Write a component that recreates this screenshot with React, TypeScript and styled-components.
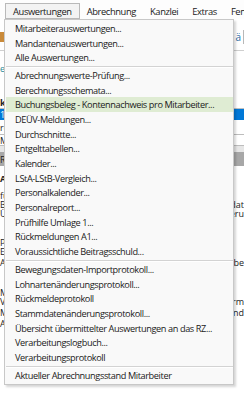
import styled, { createGlobalStyle } from "styled-components";

const GlobalStyle = createGlobalStyle`
    html, body {
        margin: 0;
        padding: 0;
        background: #ffffff;
    }
    body {
        width: 244px;
        height: 399px;
        overflow: hidden;
        font-family: "Open Sans", "Noto Sans", sans-serif;
    }
`;

const Page = styled.div`
    position: relative;
    width: 244px;
    height: 399px;
    overflow: hidden;
    background: #ffffff;
`;

const MenuBar = styled.div`
    display: flex;
    align-items: center;
    height: 19px;
    padding-left: 5px;
    background: #fdfdfd;
    font-size: 9.4px;
    letter-spacing: -0.4px;
    color: #1a1a1a;
`;

const MenuTitle = styled.div<{ $active?: boolean }>`
    display: flex;
    align-items: center;
    height: 14px;
    padding: 0 ${p => (p.$active ? 7 : 6)}px;
    margin-top: 3px;
    white-space: nowrap;
    border: 1px solid ${p => (p.$active ? "#b9b9b9" : "transparent")};
    background: ${p => (p.$active ? "#f3f3f3" : "transparent")};
`;

const Toolbar = styled.div`
    display: flex;
    justify-content: space-between;
    align-items: center;
    height: 31px;
    border-bottom: 1px solid #cfcfcf;
`;

const ToolIcon = styled.div<{ $color: string }>`
    width: 5px;
    height: 10px;
    margin-top: 4px;
    background: ${p => p.$color};
`;

const ToolGroup = styled.div`
    display: flex;
    align-items: center;
    gap: 2px;
    margin-top: 4px;
    font-size: 10px;
    color: #2b6ca3;
`;

const ToolSep = styled.div`
    width: 1px;
    height: 14px;
    background: #b8b8b8;
`;

const Content = styled.div`
    display: flex;
    flex-direction: column;
    font-size: 9px;
    color: #222;
`;

const Row = styled.div<{ $h: number; $bg?: string; $line?: string }>`
    display: flex;
    justify-content: space-between;
    align-items: center;
    height: ${p => p.$h}px;
    background: ${p => p.$bg || "transparent"};
    border-top: ${p => (p.$line ? `1px solid ${p.$line}` : "none")};
    white-space: nowrap;
    overflow: hidden;
`;

const Cell = styled.span<{ $color?: string; $bold?: boolean }>`
    color: ${p => p.$color || "#222"};
    font-weight: ${p => (p.$bold ? 700 : 400)};
`;

const Dropdown = styled.div`
    position: absolute;
    top: 19px;
    left: 4px;
    width: 227px;
    padding: 1px 0 1px 1px;
    background: #f9f9f9;
    border: 1px solid #c8c8c8;
    box-shadow: 2px 2px 2px rgba(0, 0, 0, 0.16);
    font-size: 9.2px;
    letter-spacing: -0.4px;
    color: #1a1a1a;
`;

const Item = styled.div<{ $hover?: boolean }>`
    display: flex;
    align-items: center;
    height: 14.7px;
    padding-left: 9px;
    white-space: nowrap;
    background: ${p => (p.$hover ? "#dfecd3" : "transparent")};
`;

const Separator = styled.div`
    height: 1px;
    margin-top: 1px;
    background: #d3d3d3;
    border-bottom: 1px solid #ffffff;
`;

const groups: string[][] = [
    ["Mitarbeiterauswertungen...", "Mandantenauswertungen...", "Alle Auswertungen..."],
    [
        "Abrechnungswerte-Prüfung...",
        "Berechnungsschemata...",
        "Buchungsbeleg - Kontennachweis pro Mitarbeiter...",
        "DEÜV-Meldungen...",
        "Durchschnitte...",
        "Entgelttabellen...",
        "Kalender...",
        "LStA-LStB-Vergleich...",
        "Personalkalender...",
        "Personalreport...",
        "Prüfhilfe Umlage 1...",
        "Rückmeldungen A1...",
        "Voraussichtliche Beitragsschuld...",
    ],
    [
        "Bewegungsdaten-Importprotokoll...",
        "Lohnartenänderungsprotokoll...",
        "Rückmeldeprotokoll",
        "Stammdatenänderungsprotokoll...",
        "Übersicht übermittelter Auswertungen an das RZ...",
        "Verarbeitungslogbuch...",
        "Verarbeitungsprotokoll",
    ],
    ["Aktueller Abrechnungsstand Mitarbeiter"],
];

export default function App() {
    return (
        <Page>
            <GlobalStyle />
            <MenuBar>
                <MenuTitle $active>Auswertungen</MenuTitle>
                <MenuTitle>Abrechnung</MenuTitle>
                <MenuTitle>Kanzlei</MenuTitle>
                <MenuTitle>Extras</MenuTitle>
                <MenuTitle>Fenster</MenuTitle>
            </MenuBar>

            <Toolbar>
                <ToolIcon $color="#c98a3a" />
                <ToolGroup>
                    <span>ä</span>
                    <ToolSep />
                </ToolGroup>
            </Toolbar>

            <Content>
                <Row $h={7} />
                <Row $h={20}><Cell $color="#1b8a9a">e</Cell><Cell /></Row>
                <Row $h={19} />
                <Row $h={11}><Cell $bold>k</Cell><Cell /></Row>
                <Row $h={11} $bg="#0078d7" $line="#c0c0c0"><Cell $color="#fff">1</Cell><Cell /></Row>
                <Row $h={14}><Cell>rc</Cell><Cell /></Row>
                <Row $h={10} $line="#bdbdbd"><Cell>M</Cell><Cell /></Row>
                <Row $h={6} $bg="#e6e6e6" $line="#bdbdbd" />
                <Row $h={14} $bg="#a7a7a7"><Cell>R</Cell><Cell /></Row>
                <Row $h={24}><Cell $bold>Ai</Cell><Cell /></Row>
                <Row $h={10}><Cell>fü</Cell><Cell /></Row>
                <Row $h={9}><Cell>Be</Cell><Cell>dat</Cell></Row>
                <Row $h={9}><Cell>Üt</Cell><Cell>eru</Cell></Row>
                <Row $h={20}><Cell /><Cell /></Row>
                <Row $h={9}><Cell>Pa</Cell><Cell /></Row>
                <Row $h={9}><Cell>Ei</Cell><Cell /></Row>
                <Row $h={12}><Cell>Au</Cell><Cell>rbe</Cell></Row>
                <Row $h={20}><Cell /><Cell /></Row>
                <Row $h={9}><Cell>Mi</Cell><Cell /></Row>
                <Row $h={9}><Cell>Ve</Cell><Cell>orm</Cell></Row>
                <Row $h={12}><Cell>Ma</Cell><Cell>nd</Cell></Row>
                <Row $h={10}><Cell>Au</Cell><Cell /></Row>
            </Content>

            <Dropdown>
                {groups.map((items, gi) => (
                    <div key={gi}>
                        {gi > 0 && <Separator />}
                        {items.map(label => (
                            <Item key={label} $hover={label.startsWith("Buchungsbeleg")}>
                                {label}
                            </Item>
                        ))}
                    </div>
                ))}
            </Dropdown>
        </Page>
    );
}
